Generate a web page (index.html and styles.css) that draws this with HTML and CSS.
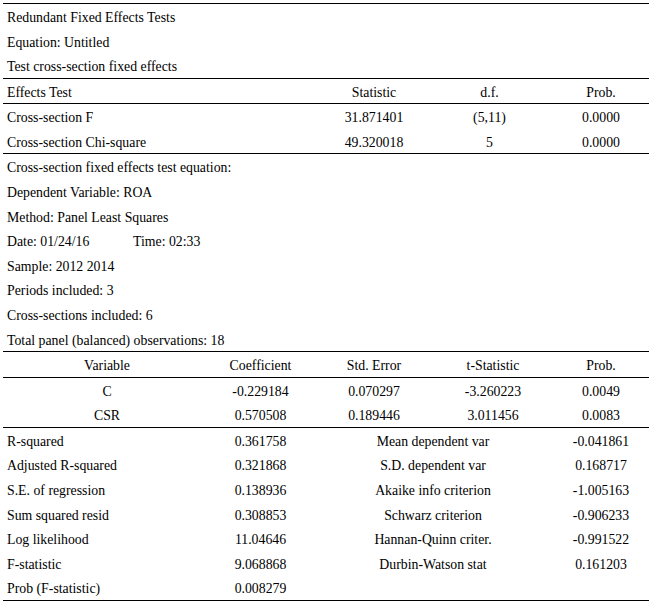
FILE: index.html
```html
<!DOCTYPE html>
<html>
<head>
<meta charset="utf-8">
<link rel="stylesheet" href="styles.css">
</head>
<body>
<div class="report">
  <div class="block">
    <div class="row"><span class="lbl">Redundant Fixed Effects Tests</span></div>
    <div class="row"><span class="lbl">Equation: Untitled</span></div>
    <div class="row"><span class="lbl">Test cross-section fixed effects</span></div>
  </div>
  <div class="block">
    <div class="row t1"><span class="lbl">Effects Test</span><span class="c">Statistic</span><span class="c">d.f.</span><span class="c">Prob.</span></div>
  </div>
  <div class="block">
    <div class="row t1"><span class="lbl">Cross-section F</span><span class="c">31.871401</span><span class="c">(5,11)</span><span class="c">0.0000</span></div>
    <div class="row t1"><span class="lbl">Cross-section Chi-square</span><span class="c">49.320018</span><span class="c">5</span><span class="c">0.0000</span></div>
  </div>
  <div class="block">
    <div class="row"><span class="lbl">Cross-section fixed effects test equation:</span></div>
    <div class="row"><span class="lbl">Dependent Variable: ROA</span></div>
    <div class="row"><span class="lbl">Method: Panel Least Squares</span></div>
    <div class="row"><span class="lbl"><span class="date">Date: 01/24/16</span>Time: 02:33</span></div>
    <div class="row"><span class="lbl">Sample: 2012 2014</span></div>
    <div class="row"><span class="lbl">Periods included: 3</span></div>
    <div class="row"><span class="lbl">Cross-sections included: 6</span></div>
    <div class="row"><span class="lbl">Total panel (balanced) observations: 18</span></div>
  </div>
  <div class="block">
    <div class="row t2"><span class="c">Variable</span><span class="c">Coefficient</span><span class="c">Std. Error</span><span class="c tstat">t-Statistic</span><span class="c">Prob.</span></div>
  </div>
  <div class="block">
    <div class="row t2"><span class="c">C</span><span class="c">-0.229184</span><span class="c">0.070297</span><span class="c tstat">-3.260223</span><span class="c">0.0049</span></div>
    <div class="row t2"><span class="c">CSR</span><span class="c">0.570508</span><span class="c">0.189446</span><span class="c tstat">3.011456</span><span class="c">0.0083</span></div>
  </div>
  <div class="block last">
    <div class="row t2"><span class="lbl">R-squared</span><span class="c">0.361758</span><span class="c span2">Mean dependent var</span><span class="c">-0.041861</span></div>
    <div class="row t2"><span class="lbl">Adjusted R-squared</span><span class="c">0.321868</span><span class="c span2">S.D. dependent var</span><span class="c">0.168717</span></div>
    <div class="row t2"><span class="lbl">S.E. of regression</span><span class="c">0.138936</span><span class="c span2">Akaike info criterion</span><span class="c">-1.005163</span></div>
    <div class="row t2"><span class="lbl">Sum squared resid</span><span class="c">0.308853</span><span class="c span2">Schwarz criterion</span><span class="c">-0.906233</span></div>
    <div class="row t2"><span class="lbl">Log likelihood</span><span class="c">11.04646</span><span class="c span2">Hannan-Quinn criter.</span><span class="c">-0.991522</span></div>
    <div class="row t2"><span class="lbl">F-statistic</span><span class="c">9.068868</span><span class="c span2">Durbin-Watson stat</span><span class="c">0.161203</span></div>
    <div class="row t2"><span class="lbl">Prob (F-statistic)</span><span class="c">0.008279</span></div>
  </div>
</div>
</body>
</html>
```
FILE: styles.css
```css
html, body {
  margin: 0;
  padding: 0;
  background: #ffffff;
}
body {
  font-family: "Liberation Serif", "Times New Roman", serif;
  font-size: 13.8px;
  color: #000000;
}
.report {
  width: 646px;
  margin: 3px 0 0 3px;
}
.block {
  border-top: 1px solid #000000;
}
.block.last {
  border-bottom: 1px solid #000000;
}
.row {
  display: grid;
  grid-template-columns: 1fr;
  box-sizing: border-box;
  height: 24.58px;
  padding-top: 3px;
  line-height: 21.58px;
  white-space: nowrap;
}
.row.t1 {
  grid-template-columns: 319px 104px 127px 96px;
}
.row.t2 {
  grid-template-columns: 208px 99px 128px 115px 96px;
}
.lbl {
  padding-left: 4px;
  text-align: left;
}
.c {
  text-align: center;
}
.tstat {
  padding-right: 5px;
}
.span2 {
  grid-column: span 2;
  padding-left: 3px;
}
.date {
  display: inline-block;
  width: 126px;
}
```
